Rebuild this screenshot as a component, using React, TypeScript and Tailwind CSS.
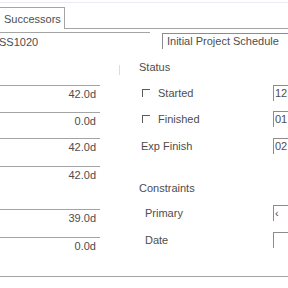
import React from 'react';

const leftRows = [
  { value: '42.0d', h: 'h-[27px]' },
  { value: '0.0d', h: 'h-[26px]' },
  { value: '42.0d', h: 'h-[28px]' },
  { value: '42.0d', h: 'h-[43px]' },
  { value: '39.0d', h: 'h-[28px]' },
  { value: '0.0d', h: 'h-[30px]' },
];

const Field: React.FC<{ text: string }> = ({ text }) => (
  <div className="ml-auto h-[16px] w-[15px] shrink-0 overflow-hidden whitespace-nowrap border-l border-t border-[#8c8c8c] pl-[1px] flex items-center">
    {text}
  </div>
);

const CheckRow: React.FC<{ label: string; value: string; className?: string }> = ({ label, value, className }) => (
  <div className={`flex h-[16px] items-center ${className ?? ''}`}>
    <div className="ml-[3px] h-[8px] w-[8px] border-l border-t border-[#5a5a5a]" />
    <span className="ml-[8px]">{label}</span>
    <Field text={value} />
  </div>
);

export default function App() {
  return (
    <div className="h-[288px] w-[288px] overflow-hidden bg-white text-[11px] leading-[11px] text-[#4d4d4d] [font-family:'Liberation_Sans',Arial,sans-serif]">
      <div className="mt-[2px] h-px bg-[#ececf5]" />

      {/* tab strip */}
      <div className="mt-[4px] flex h-[22px]">
        <div className="flex w-[65px] items-center border-r border-t border-[#a4a4a4] pl-[4px] pt-[1px]">
          Successors
        </div>
        <div className="flex-1 border-b border-[#a4a4a4]" />
      </div>

      {/* id / name row */}
      <div className="mt-[3px] flex h-[20px]">
        <div className="-ml-[1px] flex w-[151px] items-center border-t border-[#a4a4a4]">SS1020</div>
        <div className="ml-[12px] mt-[1px] flex h-[16px] flex-1 items-center overflow-hidden whitespace-nowrap border-l border-t border-[#8c8c8c] pl-[4px]">
          Initial Project Schedule
        </div>
      </div>

      {/* body */}
      <div className="flex h-[224px]">
        <div className="w-[100px] pt-[33px]">
          {leftRows.map((r, i) => (
            <div key={i} className={`${r.h} border-t border-[#a4a4a4] pr-[4px] pt-[3px] text-right`}>
              {r.value}
            </div>
          ))}
        </div>

        <div className="ml-[19px] mt-[13px] h-[10px] w-px bg-[#dcdcdc]" />

        <div className="ml-[19px] flex-1">
          <div className="mt-[10px]">Status</div>
          <CheckRow label="Started" value="12" className="mt-[12px]" />
          <CheckRow label="Finished" value="01" className="mt-[10px]" />
          <div className="mt-[11px] flex h-[16px] items-center">
            <span className="ml-[2px]">Exp Finish</span>
            <Field text="02" />
          </div>
          <div className="mt-[29px]">Constraints</div>
          <div className="mt-[11px] flex h-[16px] items-center">
            <span className="ml-[6px]">Primary</span>
            <Field text="‹" />
          </div>
          <div className="mt-[11px] flex h-[16px] items-center">
            <span className="ml-[6px]">Date</span>
            <Field text="" />
          </div>
        </div>
      </div>

      <div className="border-t border-[#a4a4a4]" />
    </div>
  );
}
